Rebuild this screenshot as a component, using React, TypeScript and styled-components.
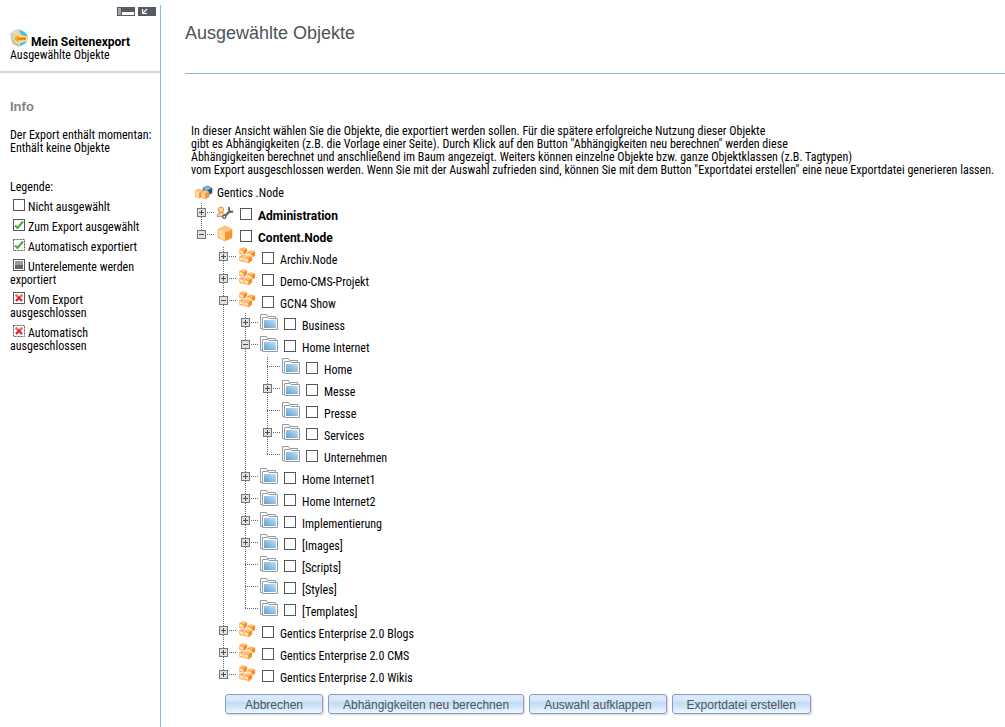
import React, { useState } from "react";
import styled, { createGlobalStyle } from "styled-components";

const Global = createGlobalStyle`
  * { box-sizing: border-box; }
  body {
    margin: 0;
    background: #fff;
    color: #000;
    font: 12px/13px "Roboto Condensed", "Liberation Sans", Arial, sans-serif;
  }
`;

const Page = styled.div`
  display: grid;
  grid-template-columns: 161px minmax(0, 1fr);
  min-height: 100vh;
`;

const Sidebar = styled.aside`
  margin-top: 5px;
  border-right: 1px solid #8cbbe0;
`;

const WindowBar = styled.div`
  display: flex;
  justify-content: flex-end;
  gap: 3px;
  padding: 2px 4px 0 0;
`;

const WindowButton = styled.button`
  display: block;
  width: 18px;
  height: 9px;
  padding: 0;
  border: 0;
  background: #555b60;
`;

const SideHeader = styled.header`
  padding: 12px 10px 9px;
  border-bottom: 2px solid #d3d3d9;
`;

const SideTitle = styled.div`
  display: flex;
  align-items: flex-end;
  gap: 3px;
  height: 21px;
  font: bold 12px/13px Roboto, "Liberation Sans", Arial, sans-serif;
`;

const Info = styled.section`
  padding: 26px 4px 0 10px;
`;

const InfoTitle = styled.h2`
  margin: 0 0 15px;
  color: #808488;
  font: bold 13px/15px "Liberation Sans", Arial, sans-serif;
`;

const Note = styled.p`
  margin: 0 0 26px;
  white-space: nowrap;
`;

const Legend = styled.ul`
  margin: 7px 0 0;
  padding: 0;
  list-style: none;
`;

const LegendItem = styled.li`
  margin-bottom: 7px;
`;

const LegendMark = styled.svg`
  display: inline-block;
  width: 12px;
  height: 12px;
  margin: -3px 3px 3px;
  vertical-align: bottom;
`;

const Main = styled.main`
  padding: 23px 0 12px 24px;
`;

const Title = styled.h1`
  margin: 0;
  padding-bottom: 30px;
  border-bottom: 1px solid #8cbbe0;
  color: #4b5358;
  font: 18px/20px "Liberation Sans", Arial, sans-serif;
`;

const Intro = styled.p`
  margin: 51px 0 7px 6px;
  white-space: nowrap;
`;

const Root = styled.div`
  display: flex;
  align-items: center;
  gap: 4px;
  height: 19px;
  margin-left: 10px;
`;

const Branch = styled.ul`
  margin: 0;
  padding: 0 0 0 22px;
  list-style: none;
`;

const Tree = styled(Branch)`
  padding-left: 12px;
`;

const Node = styled.li<{ $last: boolean }>`
  background: repeating-linear-gradient(#666a6e 0 1px, transparent 1px 2px) 4px 0 / 1px
    ${(p) => (p.$last ? "10px" : "100%")} no-repeat;
`;

const Row = styled.div`
  display: flex;
  align-items: flex-start;
  height: 22px;
`;

const Lead = styled.span`
  display: flex;
  align-items: center;
  width: 19px;
  height: 19px;
  background: repeating-linear-gradient(90deg, #666a6e 0 1px, transparent 1px 2px) 4px 9px / 13px 1px
    no-repeat;
`;

const Toggle = styled.button`
  width: 9px;
  height: 9px;
  padding: 0;
  border: 0;
  background: none;
  svg { display: block; }
`;

const IconCell = styled.span`
  display: flex;
  width: 24px;
  height: 22px;
`;

const Label = styled.label<{ $bold: boolean }>`
  display: flex;
  gap: 6px;
  padding-top: 5px;
  font: ${(p) =>
    p.$bold
      ? 'bold 12px/16px Roboto, "Liberation Sans", Arial, sans-serif'
      : '12px/16px "Roboto Condensed", "Liberation Sans", Arial, sans-serif'};
`;

const Check = styled.input`
  appearance: none;
  width: 12px;
  height: 12px;
  margin: 0;
  border: 1px solid #55585b;
  background: #fff;
  &:checked { background: #5aa53c; }
`;

const Actions = styled.div`
  display: flex;
  flex-wrap: wrap;
  gap: 5px;
  padding: 7px 0 0 40px;
`;

const Action = styled.button`
  min-width: 98px;
  height: 20px;
  padding: 1px 14px 0;
  border: 1px solid #8b9cc0;
  border-radius: 3px;
  background: linear-gradient(#dcebfa 0, #d5e7f9 35%, #c2d9f1 40%, #d8e9fa 75%, #eaf8ff 100%);
  box-shadow: 1px 1px 2px #d5d5d5;
  color: #4b565e;
  font: 12px/18px "Liberation Sans", Arial, sans-serif;
`;

type Kind = "tools" | "cube" | "cubes" | "folder";
type Item = { name: string; kind: Kind; leaf?: boolean; children?: Item[] };

const folder = (name: string, leaf = false): Item => ({ name, kind: "folder", leaf });
const project = (name: string): Item => ({ name, kind: "cubes" });

const items: Item[] = [
  { name: "Administration", kind: "tools" },
  {
    name: "Content.Node",
    kind: "cube",
    children: [
      project("Archiv.Node"),
      project("Demo-CMS-Projekt"),
      {
        name: "GCN4 Show",
        kind: "cubes",
        children: [
          folder("Business"),
          {
            name: "Home Internet",
            kind: "folder",
            children: [
              folder("Home", true),
              folder("Messe"),
              folder("Presse", true),
              folder("Services"),
              folder("Unternehmen", true),
            ],
          },
          folder("Home Internet1"),
          folder("Home Internet2"),
          folder("Implementierung"),
          folder("[Images]"),
          folder("[Scripts]", true),
          folder("[Styles]", true),
          folder("[Templates]", true),
        ],
      },
      project("Gentics Enterprise 2.0 Blogs"),
      project("Gentics Enterprise 2.0 CMS"),
      project("Gentics Enterprise 2.0 Wikis"),
    ],
  },
];

function Cube({ x, y, w, h, blue = false }: { x: number; y: number; w: number; h: number; blue?: boolean }) {
  const c = blue ? ["#3f8ccb", "#7cbbe6", "#17578f"] : ["#ffdc9c", "#ffc67c", "#fb952f"];
  const m = x + w / 2;
  const a = y + h * 0.23;
  const b = y + h * 0.78;
  const k = y + h * 0.44;
  return (
    <g>
      <path d={`M${x} ${a}L${m} ${y}L${x + w} ${a}L${m} ${k}Z`} fill={c[1]} />
      <path d={`M${x} ${a}L${m} ${k}V${y + h}L${x} ${b}Z`} fill={c[0]} />
      <path d={`M${x + w} ${a}L${m} ${k}V${y + h}L${x + w} ${b}Z`} fill={c[2]} />
      <path
        d={`M${x} ${a}L${m} ${y}L${x + w} ${a}V${b}L${m} ${y + h}L${x} ${b}Z`}
        fill="none"
        stroke={c[2]}
        strokeWidth=".6"
        strokeLinejoin="round"
      />
    </g>
  );
}

/* A small box: pale front, orange flank and rim. */
function Block({ x, y }: { x: number; y: number }) {
  return (
    <g transform={`translate(${x} ${y})`}>
      <path d="M0 2L4 0l4.500 1.500V5.500L5 8.500 0 7Z" fill="#ff8a1a" stroke="#fff" strokeWidth=".8" />
      <path d="M1 2.200L4.100.8l3.200 1L4.600 3.300Z" fill="#ffc27a" />
      <path d="M.8 3l3.500 1.100v3L.8 6.100Z" fill="#ffe8bf" />
    </g>
  );
}

function KindIcon({ kind }: { kind: Kind }) {
  if (kind === "cube")
    return (
      <svg width="18" height="20" aria-hidden="true">
        <Cube x={2} y={1} w={14} h={15} />
      </svg>
    );
  if (kind === "cubes")
    return (
      <svg width="20" height="20" aria-hidden="true">
        <Block x={1} y={0} />
        <Block x={9} y={3} />
        <Block x={1} y={7} />
        <Block x={6} y={8} />
      </svg>
    );
  if (kind === "tools")
    return (
      <svg width="20" height="20" aria-hidden="true">
        <path d="M1 13.500c0-3 1.500-4 4-4s4 1 4 4Z" fill="#f6cfa0" stroke="#b08a68" strokeWidth=".8" />
        <circle cx="5" cy="6.800" r="2.700" fill="#ffd9a0" stroke="#e0913f" />
        <path d="M8.500 13.500l5-5" stroke="#5d6368" strokeWidth="2.400" fill="none" />
        <path d="M13 4v3.200L14.500 9l2.700-.5" stroke="#5d6368" strokeWidth="1.800" fill="none" />
        <circle cx="8.300" cy="13.800" r="1.600" fill="#fff" stroke="#5d6368" strokeWidth="1.400" />
      </svg>
    );
  return (
    <svg width="20" height="20" aria-hidden="true">
      <defs>
        <linearGradient id="folder" x1="0" y1="1" x2="1" y2="0">
          <stop offset="0" stopColor="#5d9fd1" />
          <stop offset="1" stopColor="#c8e2f4" />
        </linearGradient>
      </defs>
      <path d="M2.500 15.500h-2v-14h6l1 2h8v2" fill="#fff" stroke="#929ba2" />
      <path d="M2.500 16.500v-12H8l1 1h8.500v11Z" fill="#fff" stroke="#929ba2" />
      <path d="M4 7h12v8H4z" fill="url(#folder)" />
    </svg>
  );
}

function TreeNode({ item, last, depth }: { item: Item; last: boolean; depth: number }) {
  const [open, setOpen] = useState(Boolean(item.children));
  return (
    <Node $last={last}>
      <Row>
        <Lead>
          {!item.leaf && (
            <Toggle aria-label={`${item.name} ${open ? "zuklappen" : "aufklappen"}`} onClick={() => setOpen(!open)}>
              <svg width="9" height="9" shapeRendering="crispEdges" aria-hidden="true">
                <path d="M.5.5h8v8h-8z" fill="#e0e1e2" stroke="#74787b" />
                <path d={open ? "M2 4.500h5" : "M2 4.500h5M4.500 2v5"} stroke="#4c5053" />
              </svg>
            </Toggle>
          )}
        </Lead>
        <IconCell>
          <KindIcon kind={item.kind} />
        </IconCell>
        <Label $bold={depth === 0}>
          <Check type="checkbox" />
          {item.name}
        </Label>
      </Row>
      {open && item.children && (
        <Branch>
          {item.children.map((c, i) => (
            <TreeNode key={c.name} item={c} depth={depth + 1} last={i === item.children!.length - 1} />
          ))}
        </Branch>
      )}
    </Node>
  );
}

type Mark = "none" | "check" | "part" | "cross";

function LegendIcon({ mark, dashed = false }: { mark: Mark; dashed?: boolean }) {
  return (
    <LegendMark viewBox="0 0 12 12" aria-hidden="true">
      <rect x=".5" y=".5" width="11" height="11" fill="#fff" stroke="#55585b" strokeDasharray={dashed ? "2 1" : undefined} />
      {mark === "check" && <path d="M2 6.500L4.500 9 10 2.500" fill="none" stroke="#4fae33" strokeWidth="2.200" />}
      {mark === "part" && (
        <>
          <path d="M2 2h8v4H2z" fill="#9b9b9b" />
          <path d="M2 6h8v4H2z" fill="#666" />
        </>
      )}
      {mark === "cross" && (
        <>
          <path d="M3 3l6 6M9 3L3 9" fill="none" stroke="#d92b2b" strokeWidth="2.400" />
          <path d="M2.500 2.500L5 5M9.500 2.500L7 5" fill="none" stroke="#ec7474" strokeWidth="2" />
        </>
      )}
    </LegendMark>
  );
}

const legend: { text: string; mark: Mark; dashed?: boolean }[] = [
  { text: "Nicht ausgewählt", mark: "none" },
  { text: "Zum Export ausgewählt", mark: "check" },
  { text: "Automatisch exportiert", mark: "check", dashed: true },
  { text: "Unterelemente werden exportiert", mark: "part" },
  { text: "Vom Export ausgeschlossen", mark: "cross" },
  { text: "Automatisch ausgeschlossen", mark: "cross", dashed: true },
];

export default function App() {
  return (
    <>
      <Global />
      <Page>
        <Sidebar>
          <WindowBar>
            <WindowButton aria-label="Leiste einklappen">
              <svg width="18" height="9" display="block" shapeRendering="crispEdges">
                <path d="M1 1h3v7H1z" fill="#a4a8ab" />
                <path d="M5 5h12v3H5z" fill="#fff" />
              </svg>
            </WindowButton>
            <WindowButton aria-label="Verkleinern">
              <svg width="18" height="9" display="block">
                <path d="M4.500 2v4.500H9M4.500 6.500L9 2" fill="none" stroke="#fff" strokeWidth="1.200" />
              </svg>
            </WindowButton>
          </WindowBar>
          <SideHeader>
            <SideTitle>
              <svg width="18" height="20" viewBox="0 0 18 20" aria-hidden="true">
                <path d="M0 5l3-3 6-2 5 2 4 4-1 8-8 4-6-3-2-5Z" fill="#a8dbe2" />
                <path d="M1 5l3-3 5-1 1 2-6 4Z" fill="#f0d79a" />
                <path d="M9 1l5 2 3 3-1 2-5-3Z" fill="#5fb9c6" />
                <path d="M1 8l3 5 4 2v2l-5-2-2-4Z" fill="#dcbd84" />
                <path d="M10 15l6-3-1 2-5 3Z" fill="#53aeb5" />
                <path d="M3 9.500L9 4.500v3h7.500v4.500H9v3Z" fill="#ffa51f" stroke="#ffe9a8" />
                <path d="M7 9.800h9" stroke="#ee6a12" strokeWidth="1.200" />
              </svg>
              Mein Seitenexport
            </SideTitle>
            Ausgewählte Objekte
          </SideHeader>
          <Info>
            <InfoTitle>Info</InfoTitle>
            <Note>
              Der Export enthält momentan:
              <br />
              Enthält keine Objekte
            </Note>
            Legende:
            <Legend>
              {legend.map((l) => (
                <LegendItem key={l.text}>
                  <LegendIcon mark={l.mark} dashed={l.dashed} />
                  {l.text}
                </LegendItem>
              ))}
            </Legend>
          </Info>
        </Sidebar>
        <Main>
          <Title>Ausgewählte Objekte</Title>
          <Intro>
            In dieser Ansicht wählen Sie die Objekte, die exportiert werden sollen. Für die spätere erfolgreiche Nutzung dieser Objekte
            <br />
            gibt es Abhängigkeiten (z.B. die Vorlage einer Seite). Durch Klick auf den Button "Abhängigkeiten neu berechnen" werden diese
            <br />
            Abhängigkeiten berechnet und anschließend im Baum angezeigt. Weiters können einzelne Objekte bzw. ganze Objektklassen (z.B. Tagtypen)
            <br />
            vom Export ausgeschlossen werden. Wenn Sie mit der Auswahl zufrieden sind, können Sie mit dem Button "Exportdatei erstellen" eine neue Exportdatei generieren lassen.
          </Intro>
          <Root>
            <svg width="18" height="18" aria-hidden="true">
              <Cube x={8} y={1} w={9} h={9} blue />
              <Cube x={0} y={4} w={8} h={9} />
              <Cube x={6} y={5} w={8} h={9} />
            </svg>
            Gentics .Node
          </Root>
          <Tree>
            {items.map((n, i) => (
              <TreeNode key={n.name} item={n} depth={0} last={i === items.length - 1} />
            ))}
          </Tree>
          <Actions>
            <Action>Abbrechen</Action>
            <Action>Abhängigkeiten neu berechnen</Action>
            <Action>Auswahl aufklappen</Action>
            <Action>Exportdatei erstellen</Action>
          </Actions>
        </Main>
      </Page>
    </>
  );
}
